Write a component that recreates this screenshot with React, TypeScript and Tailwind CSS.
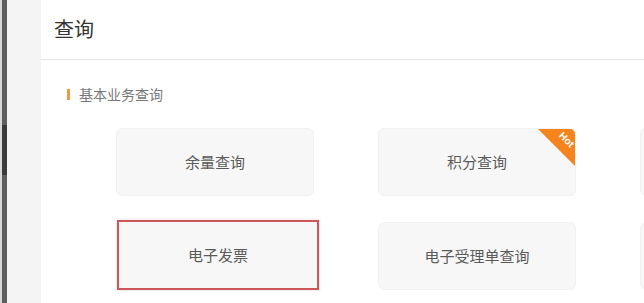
import React from "react";

const font = { fontFamily: '"Noto Sans CJK SC", "Noto Sans", sans-serif' };

function Card({ label, hot }: { label: string; hot?: boolean }) {
  return (
    <div className="relative flex h-[68px] w-[198px] shrink-0 items-center justify-center overflow-hidden rounded-[6px] border border-[#f1f1f1] bg-[#f7f7f7] text-[15px] text-[#5a5a5a]">
      {label}
      {hot && (
        <div className="absolute right-0 top-0 h-[37px] w-[37px] bg-[#f5841f] [clip-path:polygon(0_0,100%_0,100%_100%)]">
          <span className="absolute right-[0px] top-[6px] rotate-45 text-[10px] font-semibold leading-none text-white" style={{ fontFamily: '"Liberation Sans", Arial, sans-serif' }}>
            Hot
          </span>
        </div>
      )}
    </div>
  );
}

export default function App() {
  return (
    <div className="flex h-[303px] w-[644px] overflow-hidden bg-white" style={font}>
      <div className="flex h-full w-[7px] shrink-0">
        <div className="w-[2px] bg-[#d8d8d8]" />
        <div className="flex w-[5px] flex-col bg-[#5e5e5e]">
          <div className="h-[125px]" />
          <div className="h-[50px] bg-[#3a3a3a]" />
        </div>
      </div>
      <div className="w-[34px] shrink-0 bg-[#f4f4f4]" />
      <div className="flex min-w-0 flex-1 flex-col">
        <div className="flex h-[60px] shrink-0 items-center border-b border-[#e6e6e6] pb-[2px] pl-[13px] text-[20px] text-[#333]">
          查询
        </div>
        <div className="mt-[26px] flex items-center pl-[26px]">
          <div className="h-[11px] w-[3px] bg-[#f19a45]" />
          <span className="ml-[9px] text-[14px] leading-[16px] text-[#777]">基本业务查询</span>
        </div>
        <div className="mt-[26px] flex flex-col gap-[26px] pl-[75px]">
          <div className="flex gap-[64px]">
            <Card label="余量查询" />
            <Card label="积分查询" hot />
            <Card label="" />
          </div>
          <div className="flex">
            <div className="ml-[1px] mr-[59px] flex h-[70px] w-[202px] shrink-0 -translate-y-[2px] items-center justify-center border-2 border-[#c9575b] bg-[#f7f7f7] text-[15px] text-[#5a5a5a] shadow-[0_0_2px_rgba(201,87,91,0.35)]">
              电子发票
            </div>
            <div className="mr-[64px]">
              <Card label="电子受理单查询" />
            </div>
            <Card label="" />
          </div>
        </div>
      </div>
    </div>
  );
}
